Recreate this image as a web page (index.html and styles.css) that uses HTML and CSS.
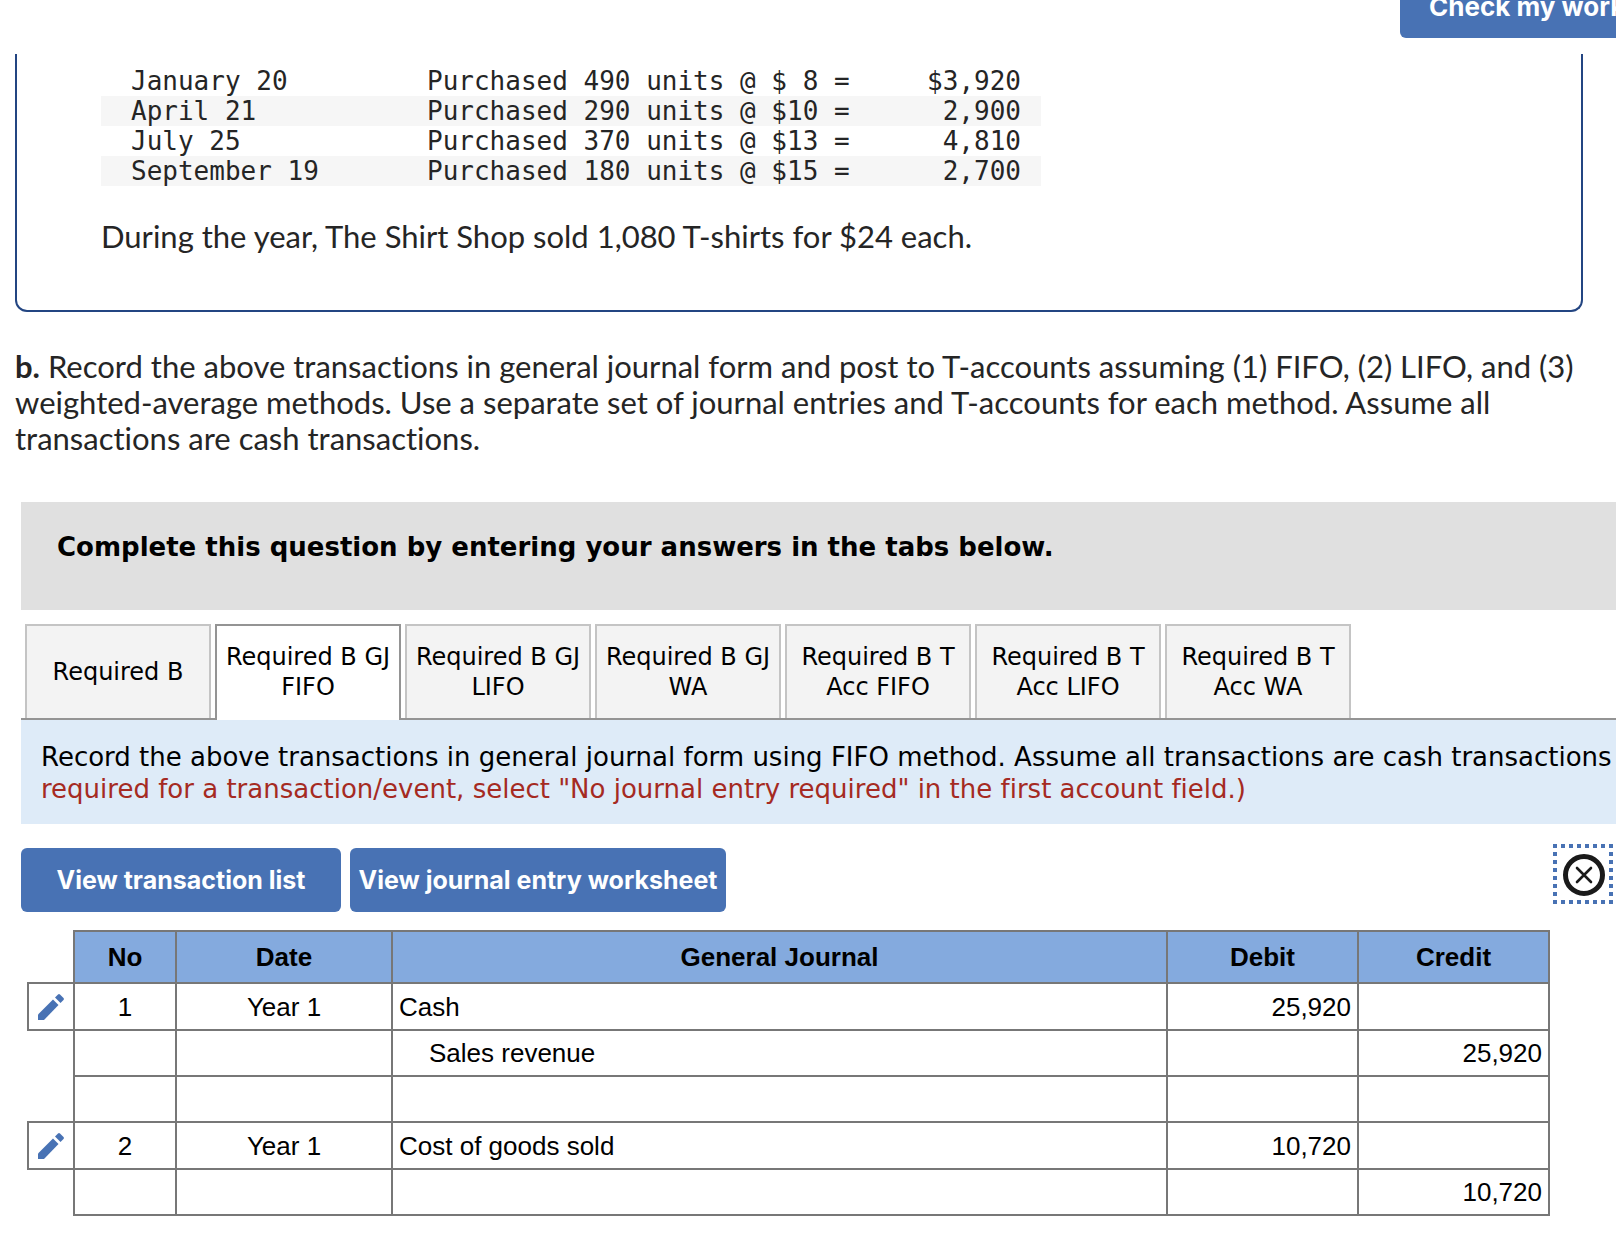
FILE: index.html
```html
<!DOCTYPE html>
<html lang="en">

<head>
    <meta charset="UTF-8">
    <meta name="viewport" content="width=device-width, initial-scale=1.0">
    <title>The Shirt Shop - General Journal</title>
    <link rel="stylesheet" href="styles.css">
</head>

<body>
    <header class="topbar">
        <button class="btn checkBtn" type="button">Check my work</button>
    </header>

    <section class="problem">
        <table class="purchases">
            <tbody>
                <tr><td>January 20</td><td>Purchased 490 units @ $ 8 =</td><td>$3,920</td></tr>
                <tr><td>April 21</td><td>Purchased 290 units @ $10 =</td><td>2,900</td></tr>
                <tr><td>July 25</td><td>Purchased 370 units @ $13 =</td><td>4,810</td></tr>
                <tr><td>September 19</td><td>Purchased 180 units @ $15 =</td><td>2,700</td></tr>
            </tbody>
        </table>
        <p>During the year, The Shirt Shop sold 1,080 T-shirts for $24 each.</p>
    </section>

    <p class="question"><b>b.</b> Record the above transactions in general journal form and post to T-accounts assuming (1) FIFO, (2) LIFO, and (3)<br>
        weighted-average methods. Use a separate set of journal entries and T-accounts for each method. Assume all<br>
        transactions are cash transactions.</p>

    <main class="answer">
        <h2 class="banner">Complete this question by entering your answers in the tabs below.</h2>

        <div class="tabs" role="tablist">
            <button class="tab" type="button" role="tab">Required B</button>
            <button class="tab active" type="button" role="tab" aria-selected="true">Required B GJ FIFO</button>
            <button class="tab" type="button" role="tab">Required B GJ LIFO</button>
            <button class="tab" type="button" role="tab">Required B GJ WA</button>
            <button class="tab" type="button" role="tab">Required B T Acc FIFO</button>
            <button class="tab" type="button" role="tab">Required B T Acc LIFO</button>
            <button class="tab" type="button" role="tab">Required B T Acc WA</button>
        </div>

        <div class="instructions">
            <p>Record the above transactions in general journal form using FIFO method. Assume all transactions are cash transactions</p>
            <p class="note">required for a transaction/event, select "No journal entry required" in the first account field.)</p>
        </div>

        <div class="toolbar">
            <div class="views">
                <button class="btn listBtn" type="button">View transaction list</button>
                <button class="btn worksheetBtn" type="button">View journal entry worksheet</button>
            </div>
            <button class="closeBtn" type="button" aria-label="Close">
                <svg width="60" height="60" viewBox="0 0 60 60" fill="none" stroke="#1a1a1a">
                    <rect x="2" y="2" width="56" height="56" stroke="#4872b4" stroke-width="4" stroke-dasharray="4 4" stroke-dashoffset="2" />
                    <circle cx="31" cy="31" r="18.5" stroke-width="5" />
                    <path d="M24 24l14 14M38 24l-14 14" stroke-width="2.6" stroke-linecap="round" />
                </svg>
            </button>
        </div>

        <table class="journal">
            <colgroup>
                <col class="colEdit">
                <col class="colNo">
                <col class="colDate">
                <col>
                <col class="colAmount">
                <col class="colAmount">
            </colgroup>
            <thead>
                <tr>
                    <td class="blank"></td>
                    <th>No</th>
                    <th>Date</th>
                    <th>General Journal</th>
                    <th>Debit</th>
                    <th>Credit</th>
                </tr>
            </thead>
            <tbody>
                <tr class="entryStart">
                    <td class="edit">
                        <button class="editBtn" type="button" aria-label="Edit entry 1">
                            <svg width="28" height="28" viewBox="0 0 28 28" fill="#4872b4">
                                <path d="M1 21.5 16 6.500 21.500 12 7 27H1z" />
                                <path d="M18 4.500 21 1.500Q22 .5 23 1.500L26.500 5Q27.500 6 26.500 7L23.500 10z" />
                            </svg>
                        </button>
                    </td>
                    <td class="center">1</td>
                    <td class="center">Year 1</td>
                    <td>Cash</td>
                    <td class="amount">25,920</td>
                    <td class="amount"></td>
                </tr>
                <tr>
                    <td class="blank"></td>
                    <td></td>
                    <td></td>
                    <td class="indent">Sales revenue</td>
                    <td class="amount"></td>
                    <td class="amount">25,920</td>
                </tr>
                <tr>
                    <td class="blank"></td>
                    <td></td>
                    <td></td>
                    <td></td>
                    <td></td>
                    <td></td>
                </tr>
                <tr class="entryStart">
                    <td class="edit">
                        <button class="editBtn" type="button" aria-label="Edit entry 2">
                            <svg width="28" height="28" viewBox="0 0 28 28" fill="#4872b4">
                                <path d="M1 21.5 16 6.500 21.500 12 7 27H1z" />
                                <path d="M18 4.500 21 1.500Q22 .5 23 1.500L26.500 5Q27.500 6 26.500 7L23.500 10z" />
                            </svg>
                        </button>
                    </td>
                    <td class="center">2</td>
                    <td class="center">Year 1</td>
                    <td>Cost of goods sold</td>
                    <td class="amount">10,720</td>
                    <td class="amount"></td>
                </tr>
                <tr>
                    <td class="blank"></td>
                    <td></td>
                    <td></td>
                    <td></td>
                    <td class="amount"></td>
                    <td class="amount">10,720</td>
                </tr>
            </tbody>
        </table>
    </main>
</body>

</html>
```

FILE: styles.css
```css
* {
  margin: 0;
  padding: 0;
  box-sizing: border-box;
}

body {
  background: #ffffff;
  color: #252525;
  font-family: Lato, sans-serif;
  font-size: 31px;
  line-height: 36px;
  font-variant-ligatures: none;
  overflow: hidden;
}

button {
  cursor: pointer;
}

.btn {
  height: 64px;
  border: none;
  border-radius: 6px;
  background: #4872b4;
  color: #ffffff;
  font-family: Inter, sans-serif;
  font-size: 25px;
  font-weight: 700;
  white-space: nowrap;
}

/* the bar is scrolled partly out of view */
.topbar {
  display: flex;
  justify-content: flex-end;
  margin-top: -26px;
  margin-right: -48px;
}

.checkBtn {
  width: 264px;
  padding: 0 29px;
  font-size: 26px;
  text-align: left;
}

.problem {
  margin: 16px 33px 0 15px;
  padding: 12px 84px 56px;
  border: 2px solid #234582;
  border-top: none;
  border-radius: 0 0 12px 12px;
}

.purchases {
  width: 940px;
  border-collapse: collapse;
  font-family: "DejaVu Sans Mono", monospace;
  font-size: 26px;
  line-height: 30px;
  white-space: pre;
}

.purchases td:first-child {
  width: 326px;
  padding-left: 30px;
}

.purchases td:last-child {
  padding-right: 20px;
  text-align: right;
}

.purchases tr:nth-child(even) {
  background: #f6f6f6;
}

.problem p {
  margin-top: 32px;
}

.question {
  margin: 36px 0 46px 15px;
  white-space: nowrap;
}

.answer {
  margin-left: 21px;
  color: #000000;
  font-family: "DejaVu Sans", Verdana, sans-serif;
}

.banner {
  padding: 27px 36px 45px;
  background: #e0e0e0;
  font-size: 26px;
  font-weight: 700;
  line-height: 36px;
  white-space: nowrap;
}

.tabs {
  display: flex;
  gap: 4px;
  margin-top: 14px;
  padding-left: 4px;
  border-bottom: 2px solid #949494;
}

.tab {
  width: 186px;
  height: 94px;
  padding: 0 4px;
  border: 2px solid #c4c4c4;
  border-bottom: none;
  background: #f3f3f3;
  color: #000000;
  font-family: inherit;
  font-size: 24px;
  line-height: 30px;
}

.tab.active {
  height: 96px;
  margin-bottom: -2px;
  padding-bottom: 2px;
  border-color: #949494;
  background: #ffffff;
}

.instructions {
  padding: 21px 20px 19px;
  background: #deebf8;
  font-size: 26px;
  line-height: 32px;
  white-space: nowrap;
}

.note {
  color: #a52a22;
}

.toolbar {
  display: flex;
  justify-content: space-between;
  padding: 20px 3px 0 0;
}

.views {
  display: flex;
  gap: 9px;
  padding-top: 4px;
}

.listBtn {
  width: 320px;
}

.worksheetBtn {
  width: 376px;
}

.closeBtn {
  width: 60px;
  height: 60px;
  border: none;
  background: none;
}

.closeBtn svg {
  display: block;
}

.journal {
  width: calc(100% - 72px);
  margin: 18px 0 0 6px;
  border-collapse: collapse;
  table-layout: fixed;
  font-family: "Liberation Sans", Arial, sans-serif;
  font-size: 26px;
  line-height: 30px;
}

.colEdit {
  width: 46px;
}

.colNo {
  width: 102px;
}

.colDate {
  width: 216px;
}

.colAmount {
  width: 191px;
}

.journal th,
.journal td {
  height: 46px;
  padding: 0 6px;
  border: 2px solid #777777;
}

.journal th {
  height: 52px;
  background: #84aade;
}

.journal .entryStart td {
  height: 47px;
}

.journal .blank {
  border-width: 0;
}

.journal .edit {
  padding: 0;
}

.journal .center {
  text-align: center;
}

.journal .indent {
  padding-left: 36px;
}

.journal .amount {
  text-align: right;
}

.editBtn {
  display: flex;
  align-items: center;
  justify-content: center;
  width: 100%;
  height: 40px;
  border: none;
  background: none;
}
```
